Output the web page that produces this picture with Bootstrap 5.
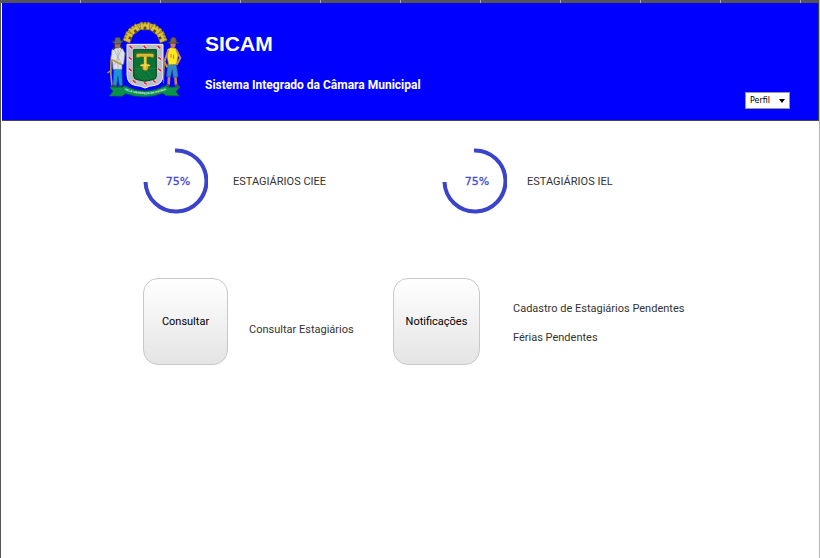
<!DOCTYPE html>
<html lang="pt-BR">
<head>
<meta charset="utf-8">
<meta name="viewport" content="width=device-width, initial-scale=1">
<title>SICAM</title>
<link href="https://cdn.jsdelivr.net/npm/bootstrap@5.3.0/dist/css/bootstrap.min.css" rel="stylesheet">
<style>
body{font-family:Roboto,"Liberation Sans",Arial,sans-serif;font-size:11px;line-height:13px;color:#333;background:#fff}
.frame{border-left:1px solid #555;border-right:1px solid #b5b5b5}
.ruler{height:3px;background:repeating-linear-gradient(90deg,#555 0 79px,#aaa 79px 80px)}
.topbar{background:#00f;color:#fff;height:118px;margin-left:1px;padding:18px 28px 0 104px;border-right:1px solid #444;border-bottom:1px solid #444;gap:20px}
.app-title{font:700 21px/24px "Liberation Sans",Arial,sans-serif;margin:11px 0 23px}
.app-sub{font-size:12px;line-height:13px;font-weight:700}
.profile{margin-top:71px;width:45px;height:17px}
.profile select{appearance:none;width:100%;height:100%;padding:0 0 0 4px;border:1px solid #999;border-radius:0;background:#fff;color:#000;font:8px "DejaVu Sans",sans-serif}
.profile::after{content:"";position:absolute;right:5px;top:7px;border:3px solid transparent;border-top:4px solid #000;border-bottom:0;pointer-events:none}
.content{padding:27px 20px 0 141px}
.stats{gap:19px;margin-bottom:64px}
.stat-main{flex:0 0 280px;gap:25px}
.stat-side{gap:20px}
.gauge{width:66px;height:66px}
.gauge text{font:11px "DejaVu Sans",sans-serif;fill:#4448d0;stroke:#4448d0;stroke-width:.3px}
.actions{padding-left:1px}
.tile{width:87px;height:87px;padding:0;border:1px solid #c8c8c8;border-radius:15px;background:linear-gradient(#fff,#e4e4e4);color:#000;font-size:11px;line-height:13px}
.tile-a{width:85px}
.query{flex:0 0 250px;gap:21px}
.query-label{margin-top:15px}
.notices{gap:33px}
.pending{gap:16px;margin-top:2px}
</style>
</head>
<body>
<div class="frame min-vh-100">
<div class="ruler"></div>
<header class="topbar d-flex align-items-start">
<svg class="flex-shrink-0" width="79" height="77" viewBox="18 18 237 231" role="img" aria-label="Brasão">
<defs><g id="turret"><path d="M121 44V22h7v5h4v-5h6v5h4v-5h7v22z" fill="#dcc03c" stroke="#7c6a24" stroke-width="2"/><path d="M131 44v-9h8v9z" fill="#5c4a1a"/></g></defs>
<path d="M79 78A57 57 0 0 1 191 78" fill="none" stroke="#7c6a24" stroke-width="19"/>
<path d="M79 78A57 57 0 0 1 191 78" fill="none" stroke="#cbb03a" stroke-width="15"/>
<path d="M79 78A57 57 0 0 1 191 78" fill="none" stroke="#eee09a" stroke-width="3" stroke-dasharray="6 4"/>
<use href="#turret"/><use href="#turret" transform="rotate(-36 135 88)"/><use href="#turret" transform="rotate(36 135 88)"/><use href="#turret" transform="rotate(-67 135 88)"/><use href="#turret" transform="rotate(67 135 88)"/>
<path d="M81 88h108v91q0 27-24 32-18 2-30 8-12-6-30-8-24-5-24-32z" fill="#bbbec4" stroke="#f4f4f4" stroke-width="3"/>
<g stroke="#f3f3f3" stroke-width="9"><path d="M89 94l8 6m34-6 8 6m34-6 8 6M87 128l8 7m80-7 8 7M87 162l8 7m80-7 8 7M99 197l8 6m25-1 8 6m19-12 8 6"/></g>
<g stroke="#e01f3c" stroke-width="5"><path d="M89 93l8 7m34-7 8 7m34-7 8 7M87 127l8 7m80-7 8 7M87 161l8 7m80-7 8 7M99 196l8 7m25-1 8 6m19-12 8 6"/></g>
<path d="M101 104h68v79q0 10-11 11l-23 5-23-5q-11-1-11-11z" fill="#087336" stroke="#064226" stroke-width="3"/>
<path d="M104 160h25m13 0h25M106 168l20 24m-16-30 26 32m-18-31 28 30m-8-28 18 22" stroke="#248c45" stroke-width="2"/>
<path d="M108 120q0-5 6-5h42q6 0 6 5v6q-6 5-10 0h-11v20q10-1 10 8l-6 1q2 10-9 13-11-3-9-13l-6-1q0-9 10-8v-20h-11q-6 5-12 0z" fill="#d4ba30" stroke="#655917" stroke-width="2"/>
<path d="M121 151h28m-14-24v35" stroke="#f2dc51" stroke-width="4"/>
<path d="M42 157h23l2 53-8 8-5-35-5 34-10-5z" fill="#1a94d6" stroke="#126090" stroke-width="2"/>
<path d="M36 104l14-9 17 5 8 15-4 32-5 2v14H39l-1-20-6-12z" fill="#dee1e5" stroke="#797e85" stroke-width="2"/>
<path d="M42 103l22 43m0-44-20 48M54 101v60" stroke="#a3a8b0" stroke-width="2"/>
<ellipse cx="53" cy="89" rx="9" ry="11" fill="#a66e4f"/><path d="M35 77l9 3 2-12 13-1 4 12 8-4-9 11-18 1z" fill="#666873" stroke="#393d49" stroke-width="2"/>
<path d="M44 89l-4 15 9-7m12-8 5 13" fill="none" stroke="#35333b" stroke-width="3"/>
<path d="M33 135q-3 40 3 80M36 134l29 15" stroke="#b39a3e" stroke-width="5" fill="none"/><path d="M22 174l12-8" stroke="#b39a3e" stroke-width="4"/>
<path d="M36 208l12 3 1 9-18-1m22-5 9-4 9 10-17 2" fill="#3b4656"/>
<path d="M207 184l-1 25m20-25 2 26" stroke="#c68459" stroke-width="8"/>
<path d="M203 148h26l5 37-14 3-3-25-6 24-11-3z" fill="#328bc9" stroke="#315c7d" stroke-width="2"/>
<path d="M202 104l10-6 15 2 8 15-5 33-24 1-4-22z" fill="#ffe91c" stroke="#b49514" stroke-width="2"/>
<path d="M205 105l-12 35 9 17m27-52 12 24-11 20" fill="none" stroke="#cc885a" stroke-width="6"/>
<path d="M194 136l-4 69M213 117v12m8-10v13" stroke="#a38936" stroke-width="3"/>
<ellipse cx="219" cy="87" rx="8" ry="12" fill="#c98153"/><path d="M203 84l8-4q1-14 9-13 9 0 9 13l8 4-17 1z" fill="#74614e" stroke="#3f3a3d" stroke-width="2"/>
<path d="M200 208l8 1v9h-15m31-10h8l8 8-14 3" fill="#49535a"/>
<path d="M29 216l37 1 8-5q61 32 123 0l9 5 34-1-12 13 9 14-39-1-9-7q-55 20-113 1l-10 8-38-1 11-14z" fill="#0a914b" stroke="#056236" stroke-width="2"/>
<path id="mottoCurve" d="M70 224q65 27 132 0" fill="none"/>
<text font-family="Liberation Sans, sans-serif" font-size="9" font-weight="700" fill="#e3f5e8"><textPath href="#mottoCurve" startOffset="50%" text-anchor="middle">PELA GRANDEZA DA PÁTRIA</textPath></text>
</svg>
<div class="flex-grow-1">
<h1 class="app-title">SICAM</h1>
<p class="app-sub mb-0">Sistema Integrado da Câmara Municipal</p>
</div>
<div class="profile position-relative flex-shrink-0"><select aria-label="Perfil"><option>Perfil</option></select></div>
</header>
<main class="content">
<section class="stats d-flex">
<div class="stat-main d-flex align-items-center">
<svg class="gauge" viewBox="0 0 66 66" role="img"><path d="M33 2.500A30.500 30.500 0 1 1 3.500 34" fill="none" stroke="#3a43cb" stroke-width="4"/><text x="36" y="37" text-anchor="middle">75%</text></svg>
<span>ESTAGIÁRIOS CIEE</span>
</div>
<div class="stat-side d-flex align-items-center">
<svg class="gauge" viewBox="0 0 66 66" role="img"><path d="M33 2.500A30.500 30.500 0 1 1 3.500 34" fill="none" stroke="#3a43cb" stroke-width="4"/><text x="36" y="37" text-anchor="middle">75%</text></svg>
<span>ESTAGIÁRIOS IEL</span>
</div>
</section>
<section class="actions d-flex">
<div class="query d-flex align-items-center">
<button type="button" class="btn tile tile-a">Consultar</button>
<span class="query-label text-nowrap">Consultar Estagiários</span>
</div>
<div class="notices d-flex align-items-center">
<button type="button" class="btn tile">Notificações</button>
<div class="pending d-flex flex-column text-nowrap"><span>Cadastro de Estagiários Pendentes</span><span>Férias Pendentes</span></div>
</div>
</section>
</main>
</div>
<script src="https://cdn.jsdelivr.net/npm/bootstrap@5.3.0/dist/js/bootstrap.bundle.min.js"></script>
</body>
</html>
